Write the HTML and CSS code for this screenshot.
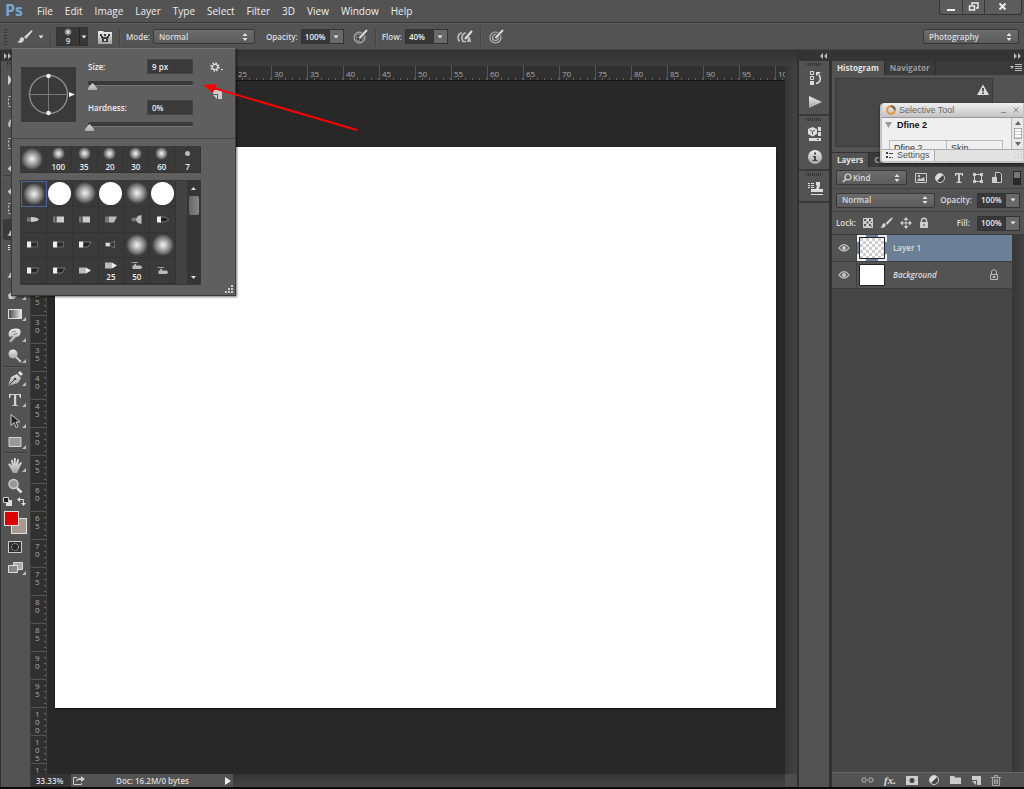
FILE: index.html
```html
<!DOCTYPE html>
<html lang="en">
<head>
<meta charset="utf-8">
<title>Photo editor</title>
<link rel="stylesheet" href="styles.css">
</head>
<body>
<svg class="sprite" aria-hidden="true">
  <defs>
    <linearGradient id="fade"><stop offset="0" stop-color="#444"/><stop offset="1" stop-color="#eee"/></linearGradient>
    <radialGradient id="soft"><stop offset="0" stop-color="#f4f4f4"/><stop offset=".35" stop-color="#bbb"/><stop offset=".75" stop-color="#727272"/><stop offset="1" stop-color="#3a3a3a"/></radialGradient>
    <linearGradient id="metal" x2="0" y2="1"><stop offset="0" stop-color="#eee"/><stop offset="1" stop-color="#a2a2a2"/></linearGradient>
    <pattern id="checker" width="6" height="6" patternUnits="userSpaceOnUse"><path fill="#fff" d="M0 0h6v6H0z"/><path fill="#ccc" d="M0 0h3v3H0zM3 3h3v3H3z"/></pattern>
  </defs>
  <symbol id="brush" viewBox="0 0 16 14"><path fill="#d4d4d4" d="M0 12c3 0 2-3 4-4.500 2-1 3.500.8 3 2.500-1 3-5 3.500-7 2zM7 7l7-6.500c1-.8 2 .3 1.300 1.200L9 9z"/></symbol>
  <symbol id="updown" viewBox="0 0 6 8"><path fill="#e4e4e4" d="M0.500 3L3 0l2.500 3zM.5 5h5L3 8z"/></symbol>
  <symbol id="down" viewBox="0 0 6 4"><path fill="#e4e4e4" d="M.5.500h5L3 3.500z"/></symbol>
  <symbol id="brushpanel" viewBox="0 0 14 14"><path fill="url(#metal)" d="M0 1h5l1 1h8v12H0z"/><path fill="#3b3b3b" d="M2 4h2v2H2zM6 4h2v2H6zM10 4h2v2h-2zM3 6h2v1h4V6h2v2h-1v4H4V8H3z"/><path fill="#ddd" d="M6 9h2v2H6z"/></symbol>
  <symbol id="pressure" viewBox="0 0 15 15"><circle cx="6.500" cy="8.500" r="5.500" fill="#777" stroke="#b8b8b8"/><path fill="#444" d="M4 6h2v2H4zM7 6h2v2H7zM4 9h2v2H4zM7 10h2v2H7zM2 8h1v2H2z"/><path d="M6.500 9l7.500-8" stroke="#4a4a4a" stroke-width="3.400"/><path d="M6.500 9l7.500-8" stroke="#ddd" stroke-width="2"/></symbol>
  <symbol id="sizepressure" viewBox="0 0 15 15"><g fill="none" stroke="#b8b8b8" stroke-width="1.200"><circle cx="6.500" cy="8.500" r="5.500"/><circle cx="6.500" cy="8.500" r="3"/></g><path d="M7 8.500l7-7.500" stroke="#4a4a4a" stroke-width="3.400"/><path d="M6.500 9l7.500-8" stroke="#ddd" stroke-width="2"/></symbol>
  <symbol id="airbrush" viewBox="0 0 16 14"><path fill="none" stroke="#bbb" stroke-width="1.700" d="M5 3C1 3 0 8 2.500 11.500M9 3C5 3 4 8 6 11.500h3"/><path d="M8 9l7-8" stroke="#ddd" stroke-width="2.200"/><path fill="#bbb" d="M11 7h2l1 5h-4z"/></symbol>
  <symbol id="corner" viewBox="0 0 4 4"><path fill="#bbb" d="M4 0v4H0z"/></symbol>
  <symbol id="t-move" viewBox="0 0 16 16"><path fill="#ccc" d="M1 2v10l3-3h4zM11 7h1v3h3v1h-3v3h-1v-3H8v-1h3z"/></symbol>
  <symbol id="t-marquee" viewBox="0 0 16 16"><path fill="none" stroke="#ccc" stroke-dasharray="2 2" d="M1.500 2.500h12v10h-12z"/></symbol>
  <symbol id="t-lasso" viewBox="0 0 16 16"><path fill="none" stroke="#ccc" stroke-width="1.500" d="M3 12C-2 5 12 0 14 5s-8 7-11 3"/></symbol>
  <symbol id="t-heal" viewBox="0 0 16 16"><path stroke="#ccc" stroke-width="4" d="M2 13L13 3"/></symbol>
  <symbol id="t-eraser" viewBox="0 0 16 16"><path fill="#ccc" d="M1 10l8-7h5v4l-7 7H2z"/></symbol>
  <symbol id="t-gradient" viewBox="0 0 16 16"><path fill="url(#fade)" stroke="#ddd" d="M1.500 3.500h13v9h-13z"/></symbol>
  <symbol id="t-smudge" viewBox="0 0 16 16"><path fill="url(#metal)" d="M2 5c1-3 5-4 8-3.500 4 .5 4 3 3.500 5C13 9 11 10 9 10L4.500 15c-1 1-3 0-2-1.500L6 9 3 10C1.500 9.500 1 7 2 5z"/><path stroke="#777" fill="none" stroke-width=".8" d="M5 5l4-1M6 7.500l4-1"/></symbol>
  <symbol id="t-dodge" viewBox="0 0 16 16"><circle cx="6" cy="6" r="4.500" fill="url(#metal)"/><path d="M9 9l5 5" stroke="#ccc" stroke-width="1.800"/></symbol>
  <symbol id="t-pen" viewBox="0 0 16 16"><path fill="url(#metal)" d="M1 15L4 6l6-3 4 4-3 5zM11 2l2-2 3 3-2 2z"/><path d="M1.500 14.500L8 8" stroke="#444"/><circle cx="8" cy="8" r="1.300" fill="#444"/></symbol>
  <symbol id="t-type" viewBox="0 0 16 16"><path fill="#d4d4d4" d="M2 2h12v4h-1l-1-3H9.200v10l2 .5V14H5v-.5l2-.5V3H4L3 6H2z"/></symbol>
  <symbol id="t-select" viewBox="0 0 16 16"><path fill="#222" stroke="#ccc" d="M4 1.500v11l3-3 2 5 2-1-2-4.500h4z"/></symbol>
  <symbol id="t-rect" viewBox="0 0 16 16"><path fill="#999" stroke="#d4d4d4" d="M2 3.500h12v9H2z"/></symbol>
  <symbol id="t-hand" viewBox="0 0 16 16"><path fill="url(#metal)" d="M1 7l2-.5 2 2L4 3l1.500-.5L7 7V1h1.700v6L10.500 2l1.500.5-1 5.500 2.500-3 1.500.8L12 12l-2 4H6z"/></symbol>
  <symbol id="t-zoom" viewBox="0 0 16 16"><circle cx="6.500" cy="6" r="4.500" fill="#999" stroke="#ccc" stroke-width="1.500"/><path d="M10 10l4.500 4.500" stroke="#ddd" stroke-width="2.500"/></symbol>
  <symbol id="defaults" viewBox="0 0 9 9"><path fill="#ddd" d="M3 3h6v6H3z"/><path fill="#222" stroke="#ccc" d="M.5.500h5v5h-5z"/></symbol>
  <symbol id="swap" viewBox="0 0 9 9"><path fill="none" stroke="#ddd" d="M2 2.500h4.500V7"/><path fill="#ddd" d="M3 0v5L0 2.500zM4 6h5L6.500 9z"/></symbol>
  <symbol id="mask" viewBox="0 0 14 12"><path fill="#333" stroke="#ccc" d="M.5.500h13v11H.5z"/><circle cx="7" cy="6" r="3.500" fill="#292929" stroke="#bbb" stroke-dasharray="1.500 1"/></symbol>
  <symbol id="screen" viewBox="0 0 15 12"><path fill="#aaa" stroke="#ddd" d="M5.500.5h9v7h-9z"/><path fill="#888" stroke="#ddd" d="M.5 3.500h9v7h-9z"/></symbol>
  <symbol id="d-history" viewBox="0 0 14 15"><path fill="#555" stroke="#ddd" d="M2.500.5h3v3h-3zM2.500 5.500h3v3h-3z"/><path fill="#ddd" d="M2 10h4v4H2z"/><path fill="none" stroke="#ddd" stroke-width="1.600" d="M8 12.500c5-1 5-5 3-9"/><path fill="#ddd" d="M8 5V1h5z"/></symbol>
  <symbol id="d-play" viewBox="0 0 14 12"><path fill="url(#metal)" d="M1 0l13 6-13 6z"/></symbol>
  <symbol id="d-props" viewBox="0 0 14 14"><path fill="#ddd" d="M4.500 0L9 2v5L4.500 9.500 0 7V2z"/><path stroke="#555" fill="none" d="M2 3l2.500 1.500L7 3M4.500 4.500v3"/><path fill="#ddd" d="M10 0h3v4h-3zM10 5h3v4h-3zM1 11h12v3H1z"/><path fill="#555" d="M9 12h2v1H9z"/></symbol>
  <symbol id="d-info" viewBox="0 0 14 14"><circle cx="7" cy="7" r="7" fill="url(#metal)"/><path fill="#444" d="M6 2.500h2v2H6zM5 6h3v4h1.500v1h-5v-1H6V7H5z"/></symbol>
  <symbol id="d-clone" viewBox="0 0 16 14"><path fill="#ddd" d="M1 1h2v1H1zM4 1h3v1H4zM1 3h2v1H1zM4 3h3v1H4zM1 5h2v1H1zM4 5h3v1H4zM9 0h4v3l-1 4h4v3H4V7h5l1-3-1-1zM4 12h12v1H4z"/></symbol>
  <symbol id="warn" viewBox="0 0 12 12"><path fill="#ddd" d="M6 .5L12 11H0z"/><path fill="#333" d="M5.200 4h1.600v3.500H5.200zM5.200 8.500h1.600V10H5.200z"/></symbol>
  <symbol id="menu" viewBox="0 0 12 8"><path fill="#bbb" d="M0 2h4L2 5zM5 0h7v1H5zM5 2h7v1H5zM5 4h7v1H5zM5 6h7v1H5z"/></symbol>
  <symbol id="search" viewBox="0 0 10 10"><circle cx="6" cy="4" r="3" fill="none" stroke="#ddd" stroke-width="1.200"/><path d="M4 6L1 9" stroke="#ddd" stroke-width="1.500"/></symbol>
  <symbol id="f-image" viewBox="0 0 12 12"><path fill="none" stroke="#ccc" d="M.5 1.500h11v9H.5z"/><path fill="#ccc" d="M2 9l2-3 2 1 3-2 1 4zM3 3h2v2H3z"/></symbol>
  <symbol id="f-adjust" viewBox="0 0 12 12"><circle cx="6" cy="6" r="4.500" fill="#ddd"/><path fill="#444" d="M9.200 2.800a4.500 4.500 0 01-6.400 6.400z"/><circle cx="6" cy="6" r="4.500" fill="none" stroke="#ccc"/></symbol>
  <symbol id="f-type" viewBox="0 0 12 12"><path fill="#ccc" d="M2 1h8v3H9L8.500 2.500H7v7l1.500.5v1h-5v-1L5 9.500v-7H3.500L3 4H2z"/></symbol>
  <symbol id="f-shape" viewBox="0 0 12 12"><path fill="none" stroke="#ccc" d="M2.500 2.500h7v7h-7z"/><path fill="#ccc" d="M1 1h3v3H1zM8 1h3v3H8zM1 8h3v3H1zM8 8h3v3H8z"/></symbol>
  <symbol id="f-smart" viewBox="0 0 12 12"><path fill="#444" stroke="#ccc" d="M4.500.5h4l2 2v8h-6z"/><path fill="#ccc" d="M1 5h5v6H1z"/></symbol>
  <symbol id="f-switch" viewBox="0 0 8 14"><path fill="#292929" d="M0 0h8v14H0z"/><path fill="#777" d="M1 1h6v6H1z"/></symbol>
  <symbol id="l-pixels" viewBox="0 0 10 10"><path fill="#ccc" d="M0 0h10v10H0z"/><path fill="#555" d="M1 1h2v2H1zM6 1h2v2H6zM3.500 3.500h2v2h-2zM1 6h2v2H1zM6 6h2v2H6zM8 8h1v1H8zM8 4h1v1H8z"/></symbol>
  <symbol id="l-move" viewBox="0 0 12 12"><path fill="#ccc" d="M6 0l2.500 3h-2v2.500H9v-2L12 6 9 8.500v-2H6.500V9h2L6 12 3.500 9h2V6.500H3v2L0 6l3-2.500v2h2.500V3h-2z"/></symbol>
  <symbol id="lock" viewBox="0 0 10 12"><path fill="none" stroke="#ccc" stroke-width="1.400" d="M2.500 6V3.500c0-3 5-3 5 0V6"/><path fill="#ccc" d="M1 5h8v6H1z"/><path fill="#444" d="M4.500 7h1v2h-1z"/></symbol>
  <symbol id="lock-open" viewBox="0 0 10 12"><path fill="none" stroke="#bbb" d="M2.500 5V3c0-3 5-3 5 0v2M1.500 5.500h7v5h-7zM4 7.500h2v1H4z"/></symbol>
  <symbol id="eye" viewBox="0 0 12 8"><path fill="#555" stroke="#bbb" stroke-width="1.300" d="M1 4c3-4.500 7-4.500 10 0-3 4-7 4-10 0z"/><circle cx="6" cy="4" r="2" fill="#ccc"/></symbol>
  <symbol id="b-link" viewBox="0 0 13 10"><path fill="none" stroke="#999" stroke-width="1.300" d="M5 7H3.500a2.500 2 0 010-4H5M8 3h1.500a2.500 2 0 010 4H8M4 5h5"/></symbol>
  <symbol id="b-mask" viewBox="0 0 12 10"><path fill="#ccc" d="M0 1h12v9H0z"/><circle cx="6" cy="5.500" r="2.500" fill="#444"/></symbol>
  <symbol id="b-folder" viewBox="0 0 11 10"><path fill="#ccc" d="M0 1h4l1 1.500h6V9H0z"/></symbol>
  <symbol id="b-new" viewBox="0 0 10 10"><path fill="#ccc" d="M1 1h9v9H6V5H1z"/><path fill="#ccc" d="M1 6h4v4z"/></symbol>
  <symbol id="b-trash" viewBox="0 0 10 11"><path fill="none" stroke="#aaa" d="M0 2.500h10M3.500 2V.5h3V2M1.500 3v7.500h7V3M3.500 4v5M5 4v5M6.500 4v5"/></symbol>
  <symbol id="gear" viewBox="0 0 13 10"><circle cx="5" cy="5" r="3.700" fill="none" stroke="#ddd" stroke-width="2" stroke-dasharray="1.500 1.400"/><circle cx="5" cy="5" r="2.600" fill="none" stroke="#ddd" stroke-width="1.200"/><path fill="#ddd" d="M11 7h2v1h-2z"/></symbol>
  <symbol id="export" viewBox="0 0 12 9"><path fill="none" stroke="#ccc" d="M4 1.500H.5v7h8V7"/><path fill="#ccc" d="M3 6c0-3 2-4 5-4V0l4 3-4 3V4C6 4 4 4 3 6z"/></symbol>
  <symbol id="tip-round" viewBox="0 0 14 8"><path fill="#777" d="M1 2h5v4H1z"/><path fill="#ccc" d="M5 1.500c4 0 7 1 8 2.500-1 1.500-4 2.500-8 2.500z"/></symbol>
  <symbol id="tip-flat" viewBox="0 0 14 8"><path fill="#777" d="M1 1h4v6H1z"/><path fill="#ccc" d="M5 1h7v6H5z"/><path fill="#555" d="M3 1h1v6H3z"/></symbol>
  <symbol id="tip-angle" viewBox="0 0 14 8"><path fill="#777" d="M1 1h4v6H1z"/><path fill="#bbb" d="M5 1h8l-3 6H5z"/></symbol>
  <symbol id="tip-fan" viewBox="0 0 14 10"><path fill="#777" d="M1 3h5v4H1z"/><path fill="#bbb" d="M6 4l2-3 4-1v10l-4-1-2-3z"/></symbol>
  <symbol id="tip-dark" viewBox="0 0 14 8"><path fill="#1f1f1f" stroke="#777" d="M4 1.500h5l4 2.500-4 2.500H4z"/><path fill="#eee" d="M1 1h4v6H1z"/></symbol>
  <symbol id="tip-box" viewBox="0 0 14 8"><path fill="#292929" stroke="#666" d="M5 1.500h6.500v5H5z"/><path fill="#eee" d="M1 1h4v6H1z"/></symbol>
  <symbol id="tip-slant" viewBox="0 0 14 8"><path fill="#222" stroke="#777" d="M5 1.500h8l-3 5H5z"/><path fill="#eee" d="M1 1h4v6H1z"/></symbol>
  <symbol id="tip-fandark" viewBox="0 0 14 10"><path fill="#ddd" d="M1 3h5v4H1z"/><path fill="#333" stroke="#777" d="M6 4l5-3v8L6 6z"/></symbol>
  <symbol id="tip-pencil" viewBox="0 0 14 8"><path fill="#bbb" d="M1 1h7v6H1z"/><path fill="#eee" d="M8 1l5 3-5 3z"/></symbol>
  <symbol id="tip-air" viewBox="0 0 14 10"><path fill="#bbb" d="M1 1h7v1H1zM4 3h2v2H4zM2 5h9l2 2-2 2H2z"/></symbol>
</svg>

<div class="app">
  <header class="menubar">
    <div class="logo">Ps</div>
    <nav class="menus">
      <button>File</button><button>Edit</button><button>Image</button><button>Layer</button><button>Type</button><button>Select</button><button>Filter</button><button>3D</button><button>View</button><button>Window</button><button>Help</button>
    </nav>
    <div class="window-buttons">
      <button aria-label="Minimize"><svg width="10" height="10"><path fill="#eee" d="M1 7h8v2H1z"/></svg></button>
      <button aria-label="Restore"><svg width="12" height="10"><path fill="none" stroke="#eee" stroke-width="1.500" d="M4 3V1h6v5H8M1.500 4h5v4h-5z"/></svg></button>
      <button class="close" aria-label="Close"><svg width="10" height="10"><path stroke="#eee" stroke-width="2" d="M1.500 1.500l6 6M7.500 1.500l-6 6"/></svg></button>
    </div>
  </header>

  <div class="options">
    <span class="grip-v"></span>
    <button class="tool-preset" aria-label="Brush tool"><svg width="16" height="14"><use href="#brush"/></svg><svg width="6" height="4"><use href="#down"/></svg></button>
    <span class="rule"></span>
    <button class="brush-preset" aria-label="Brush preset"><span class="brush-value"><svg width="8" height="8"><circle cx="4" cy="4" r="4" fill="url(#soft)"/></svg>9</span><span class="brush-open"><svg width="6" height="4"><use href="#down"/></svg></span></button>
    <button class="icon" aria-label="Brush panel"><svg width="14" height="14"><use href="#brushpanel"/></svg></button>
    <span class="rule"></span>
    <label for="mode">Mode:</label>
    <span class="select mode"><select id="mode"><option>Normal</option></select><svg width="6" height="8"><use href="#updown"/></svg></span>
    <label for="opacity">Opacity:</label>
    <span class="combo"><input id="opacity" value="100%"><button aria-label="Opacity slider"><svg width="6" height="4"><use href="#down"/></svg></button></span>
    <button class="icon" aria-label="Pressure for opacity"><svg width="15" height="15"><use href="#pressure"/></svg></button>
    <span class="rule"></span>
    <label for="flow">Flow:</label>
    <span class="combo"><input id="flow" value="40%"><button aria-label="Flow slider"><svg width="6" height="4"><use href="#down"/></svg></button></span>
    <button class="icon" aria-label="Airbrush"><svg width="16" height="14"><use href="#airbrush"/></svg></button>
    <span class="rule"></span>
    <button class="icon" aria-label="Pressure for size"><svg width="15" height="15"><use href="#sizepressure"/></svg></button>
    <span class="select workspace-select"><select aria-label="Workspace"><option>Photography</option></select><svg width="6" height="8"><use href="#updown"/></svg></span>
  </div>

  <main class="workspace">
    <aside class="toolbox">
      <div class="dock-head left"><svg width="7" height="6"><path fill="#bbb" d="M0 0l3 3-3 3zM4 0l3 3-3 3z"/></svg></div>
      <div class="tools">
        <span class="grip-h"></span>
        <button aria-label="Move"><svg width="16" height="16"><use href="#t-move"/></svg></button>
        <button aria-label="Marquee"><svg width="16" height="16"><use href="#t-marquee"/></svg></button>
        <button aria-label="Lasso"><svg width="16" height="16"><use href="#t-lasso"/></svg></button>
        <button aria-label="Quick selection"><svg width="16" height="16"><use href="#t-marquee"/></svg></button>
        <button aria-label="Eyedropper"><svg width="16" height="16"><use href="#t-heal"/></svg></button>
        <hr>
        <button aria-label="Healing"><svg width="16" height="16"><use href="#t-heal"/></svg></button>
        <button aria-label="Crop"><svg width="16" height="16"><use href="#t-marquee"/></svg></button>
        <button class="active" aria-label="Brush"><svg width="16" height="14"><use href="#brush"/></svg></button>
        <button aria-label="Clone stamp"><svg width="16" height="16"><use href="#d-clone"/></svg></button>
        <button aria-label="History brush"><svg width="16" height="14"><use href="#brush"/></svg></button>
        <button aria-label="Eraser"><svg width="16" height="16"><use href="#t-eraser"/></svg><svg class="more" width="4" height="4"><use href="#corner"/></svg></button>
        <button aria-label="Gradient"><svg width="16" height="16"><use href="#t-gradient"/></svg><svg class="more" width="4" height="4"><use href="#corner"/></svg></button>
        <button aria-label="Smudge"><svg width="16" height="16"><use href="#t-smudge"/></svg><svg class="more" width="4" height="4"><use href="#corner"/></svg></button>
        <button aria-label="Dodge"><svg width="16" height="16"><use href="#t-dodge"/></svg><svg class="more" width="4" height="4"><use href="#corner"/></svg></button>
        <hr>
        <button aria-label="Pen"><svg width="16" height="16"><use href="#t-pen"/></svg><svg class="more" width="4" height="4"><use href="#corner"/></svg></button>
        <button aria-label="Type"><svg width="16" height="16"><use href="#t-type"/></svg><svg class="more" width="4" height="4"><use href="#corner"/></svg></button>
        <button aria-label="Path selection"><svg width="16" height="16"><use href="#t-select"/></svg><svg class="more" width="4" height="4"><use href="#corner"/></svg></button>
        <button aria-label="Rectangle"><svg width="16" height="16"><use href="#t-rect"/></svg><svg class="more" width="4" height="4"><use href="#corner"/></svg></button>
        <hr>
        <button aria-label="Hand"><svg width="16" height="16"><use href="#t-hand"/></svg><svg class="more" width="4" height="4"><use href="#corner"/></svg></button>
        <button aria-label="Zoom"><svg width="16" height="16"><use href="#t-zoom"/></svg></button>
        <div class="color-tools">
          <button aria-label="Default colors"><svg width="9" height="9"><use href="#defaults"/></svg></button>
          <button aria-label="Swap colors"><svg width="9" height="9"><use href="#swap"/></svg></button>
        </div>
        <div class="swatches"><button class="back" aria-label="Background color"></button><button class="fore" aria-label="Foreground color"></button></div>
        <button aria-label="Quick mask"><svg width="14" height="12"><use href="#mask"/></svg></button>
        <button aria-label="Screen mode"><svg width="15" height="12"><use href="#screen"/></svg><svg class="more" width="4" height="4"><use href="#corner"/></svg></button>
      </div>
    </aside>

    <section class="document">
      <div class="doc-tabs"></div>
      <div class="ruler-corner"></div>
      <div class="ruler-x" id="ruler-x"></div>
      <div class="ruler-y" id="ruler-y"></div>
      <div class="stage"><div class="canvas"></div></div>
      <div class="scroll-y"></div>
      <footer class="status">
        <span class="zoom">33.33%</span>
        <div class="doc-info"><svg width="12" height="9"><use href="#export"/></svg><span>Doc: 16.2M/0 bytes</span><svg width="6" height="8"><path fill="#eee" d="M0 0l6 4-6 4z"/></svg></div>
        <span class="scroll-x"></span><span class="scroll-end"></span>
      </footer>
    </section>

    <aside class="docks">
      <div class="dock-head"><svg class="collapse" width="7" height="6"><path fill="#bbb" d="M3 0v6L0 3zM7 0v6L4 3z"/></svg><svg width="7" height="6"><path fill="#bbb" d="M0 0l3 3-3 3zM4 0l3 3-3 3z"/></svg></div>
      <div class="icon-dock">
        <div class="dock-group"><span class="grip-h"></span><button aria-label="History"><svg width="14" height="15"><use href="#d-history"/></svg></button><button aria-label="Actions"><svg width="14" height="12"><use href="#d-play"/></svg></button></div>
        <div class="dock-group"><span class="grip-h"></span><button aria-label="Properties"><svg width="14" height="14"><use href="#d-props"/></svg></button><button aria-label="Info"><svg width="14" height="14"><use href="#d-info"/></svg></button></div>
        <div class="dock-group"><span class="grip-h"></span><button aria-label="Clone source"><svg width="16" height="14"><use href="#d-clone"/></svg></button></div>
      </div>
      <div class="panels">
        <div class="tabs"><button class="on">Histogram</button><button>Navigator</button><svg width="12" height="8"><use href="#menu"/></svg></div>
        <div class="histogram"><div class="plot"><svg width="12" height="12"><use href="#warn"/></svg></div></div>
        <div class="tabs"><button class="on">Layers</button><button>Channels</button><button>Paths</button></div>
        <div class="filters">
          <span class="select kind"><svg class="lens" width="10" height="10"><use href="#search"/></svg><select aria-label="Filter kind"><option>Kind</option></select><svg width="6" height="8"><use href="#updown"/></svg></span>
          <button aria-label="Pixel layers"><svg width="12" height="12"><use href="#f-image"/></svg></button>
          <button aria-label="Adjustment layers"><svg width="12" height="12"><use href="#f-adjust"/></svg></button>
          <button aria-label="Type layers"><svg width="12" height="12"><use href="#f-type"/></svg></button>
          <button aria-label="Shape layers"><svg width="12" height="12"><use href="#f-shape"/></svg></button>
          <button aria-label="Smart objects"><svg width="12" height="12"><use href="#f-smart"/></svg></button>
          <button aria-label="Filtering"><svg width="8" height="14"><use href="#f-switch"/></svg></button>
        </div>
        <div class="blend">
          <span class="select blend-select"><select aria-label="Blend mode"><option>Normal</option></select><svg width="6" height="8"><use href="#updown"/></svg></span>
          <label for="lopacity">Opacity:</label>
          <span class="combo"><input id="lopacity" value="100%"><button aria-label="Layer opacity slider"><svg width="6" height="4"><use href="#down"/></svg></button></span>
        </div>
        <div class="locks">
          <span>Lock:</span>
          <button aria-label="Lock pixels"><svg width="10" height="10"><use href="#l-pixels"/></svg></button>
          <button aria-label="Lock painting"><svg width="13" height="12"><use href="#brush"/></svg></button>
          <button aria-label="Lock position"><svg width="12" height="12"><use href="#l-move"/></svg></button>
          <button aria-label="Lock all"><svg width="10" height="12"><use href="#lock"/></svg></button>
          <label class="fill" for="fill">Fill:</label>
          <span class="combo"><input id="fill" value="100%"><button aria-label="Fill slider"><svg width="6" height="4"><use href="#down"/></svg></button></span>
        </div>
        <div class="layer-area">
          <div class="layer-list">
            <div class="layer chosen"><button class="eye" aria-label="Hide layer"><svg width="12" height="8"><use href="#eye"/></svg></button><svg width="30" height="26"><path fill="none" stroke="#e8eef4" stroke-width="2" d="M1 7V1h8M21 1h8v6M29 19v6h-8M9 25H1v-6"/><path fill="url(#checker)" stroke="#222" d="M2.500 2.500h25v21h-25z"/></svg><span>Layer 1</span></div>
            <div class="layer"><button class="eye" aria-label="Hide background"><svg width="12" height="8"><use href="#eye"/></svg></button><svg width="30" height="26"><path fill="#fff" stroke="#222" d="M2.500 2.500h25v21h-25z"/></svg><i>Background</i><svg class="locked" width="10" height="12"><use href="#lock-open"/></svg></div>
          </div>
        </div>
        <div class="layer-actions">
          <button aria-label="Link"><svg width="13" height="10"><use href="#b-link"/></svg></button>
          <button class="fx">fx.</button>
          <button aria-label="Add mask"><svg width="12" height="10"><use href="#b-mask"/></svg></button>
          <button aria-label="Adjustment"><svg width="12" height="12"><use href="#f-adjust"/></svg></button>
          <button aria-label="Group"><svg width="11" height="10"><use href="#b-folder"/></svg></button>
          <button aria-label="New layer"><svg width="10" height="10"><use href="#b-new"/></svg></button>
          <button aria-label="Delete layer"><svg width="10" height="11"><use href="#b-trash"/></svg></button>
        </div>
      </div>
    </aside>
  </main>

  <section class="brush-popup">
    <div class="brush-top">
      <svg width="55" height="55"><path fill="#3a3a3a" d="M0 0h55v55H0z"/><path stroke="#777" d="M9 27.500h38M27.500 9v37"/><circle cx="27.500" cy="27.500" r="19" fill="none" stroke="#888" stroke-width="1.500"/><circle cx="27.500" cy="9" r="2.300" fill="#eee"/><circle cx="27.500" cy="46" r="2.300" fill="#eee"/><path fill="#eee" d="M48 25v5l6-2.500z"/></svg>
      <div class="brush-fields">
        <div class="field"><label for="size">Size:</label><input id="size" value="9 px"></div>
        <input type="range" aria-label="Size" min="0" max="100" value="0" class="size-range">
        <div class="field"><label for="hardness">Hardness:</label><input id="hardness" value="0%"></div>
        <input type="range" aria-label="Hardness" min="0" max="100" value="0" class="hard-range">
      </div>
      <div class="brush-side"><button aria-label="Settings"><svg width="13" height="10"><use href="#gear"/></svg></button><button aria-label="New preset"><svg width="10" height="10"><use href="#b-new"/></svg></button></div>
    </div>
    <div class="brush-lists">
      <div class="recent" id="recent"></div>
      <div class="presets"><div class="preset-grid" id="presets"></div><div class="preset-scroll"><svg width="5" height="3"><path fill="#ddd" d="M0 3l2.500-3L5 3z"/></svg><span></span><svg width="5" height="3"><path fill="#ddd" d="M0 0h5L2.500 3z"/></svg></div></div>
    </div>
    <svg class="resize" width="8" height="8"><path fill="#ccc" d="M6 0h2v2H6zM3 3h2v2H3zM6 3h2v2H6zM0 6h2v2H0zM3 6h2v2H3zM6 6h2v2H6z"/></svg>
  </section>

  <section class="plugin">
    <header><svg width="10" height="10"><circle cx="5" cy="5" r="3.800" fill="none" stroke="#e8943a" stroke-width="2"/><path fill="none" stroke="#666" stroke-width="2" d="M5 1.200A3.800 3.800 0 018.800 5"/></svg><span>Selective Tool</span><button aria-label="Minimize plug-in"><svg width="6" height="8"><path fill="#888" d="M0 6h5v1H0z"/></svg></button><button aria-label="Close plug-in"><svg width="6" height="8"><path stroke="#888" d="M.5 1.500l5 5M5.500 1.500l-5 5"/></svg></button></header>
    <div class="plugin-body">
      <div class="plugin-main">
        <h2><svg width="7" height="6"><path fill="#999" d="M0 0h7L3.500 6z"/></svg>Dfine 2</h2>
        <div class="plugin-grid"><span>Dfine 2</span><span>Skin</span></div>
      </div>
      <div class="plugin-scroll"><svg width="6" height="4"><path fill="#666" d="M0 4l3-4 3 4z"/></svg><span></span><svg width="6" height="4"><path fill="#666" d="M0 0h6L3 4z"/></svg></div>
    </div>
    <footer><button><svg width="8" height="7"><path fill="#444" d="M0 0h2v2H0zM0 4h2v2H0zM3 1h4v1H3zM3 5h2v1H3zM6 5h1v1H6z"/></svg>Settings</button><svg width="9" height="9"><path fill="#bbb" d="M7 0h1v1H7zM4 3h1v1H4zM7 3h1v1H7zM1 6h1v1H1zM4 6h1v1H4zM7 6h1v1H7z"/></svg></footer>
  </section>

  <svg class="arrow" width="160" height="52"><path stroke="#f00" stroke-width="2" d="M10 5l147 43"/><path fill="#f00" d="M3 3l14-1-4 9z"/></svg>
</div>
<script src="script.js"></script>
</body>
</html>
```

FILE: styles.css
```css
* { box-sizing: border-box; }
body { margin: 0; background: #0d0a0c; color: #ddd; font: 600 8px/12px "Open Sans", "Noto Sans", sans-serif; }
button, input, select { font: inherit; color: inherit; margin: 0; padding: 0; border: 0; background: none; border-radius: 0; }
button { display: flex; align-items: center; justify-content: center; }
svg { display: block; flex: none; }
.sprite { position: absolute; width: 0; height: 0; }
.app { position: relative; height: 100vh; min-height: 620px; overflow: hidden; display: flex; flex-direction: column; padding-bottom: 2px; }

.menubar { display: flex; height: 23px; background: #535353; border-bottom: 1px solid #383838; }
.logo { width: 31px; padding-left: 5px; font: 700 16px/21px "Open Sans", sans-serif; color: #77a6d6; }
.menus { display: flex; align-items: center; gap: 12px; padding-left: 6px; font: 400 10px/20px "Open Sans", sans-serif; color: #eee; }
.window-buttons { display: flex; margin: 0 2px 0 auto; height: 15px; border: 1px solid #333; border-top: 0; border-radius: 0 0 3px 3px; background: #5c5c5c; }
.window-buttons button { width: 22px; }
.window-buttons button + button { border-left: 1px solid #383838; }
.window-buttons .close { width: 37px; }

.options { display: flex; align-items: center; height: 27px; padding: 0 5px 0 4px; background: #535353; border-top: 1px solid #5e5e5e; border-bottom: 1px solid #444; }
.grip-v { width: 3px; height: 16px; background: repeating-linear-gradient(#333 0 1px, transparent 1px 3px); }
.rule { width: 2px; height: 18px; background: #444; border-right: 1px solid #5a5a5a; }
.tool-preset { gap: 5px; margin: 0 6px 0 10px; }
.brush-preset { height: 19px; margin: 0 10px 0 4px; border: 1px solid #333; background: #383838; }
.brush-value { display: flex; flex-direction: column; align-items: center; width: 22px; line-height: 9px; }
.brush-open { display: flex; align-items: center; justify-content: center; width: 8px; height: 100%; border-left: 1px solid #222; }
.brush-preset + .icon { margin-right: 7px; }
.rule + label { margin-left: 5px; }
.options label { margin-right: 3px; }
.select { display: grid; grid-template-columns: 1fr 12px; align-items: center; height: 15px; border: 1px solid #373737; border-radius: 2px; background: linear-gradient(#6c6c6c, #5c5c5c); }
.select select { grid-area: 1 / 1 / 2 / 3; width: 100%; height: 13px; padding: 0 5px; appearance: none; line-height: 12px; outline: none; }
.select > svg:last-child { grid-area: 1 / 2; pointer-events: none; }
.mode { width: 102px; margin-right: 11px; }
.workspace-select { width: 96px; margin-left: auto; }
.combo { display: flex; height: 15px; border: 1px solid #333; background: #383838; }
.combo input { width: 27px; padding-left: 3px; outline: none; color: #eee; }
.combo button { width: 14px; background: #686868; border-left: 1px solid #333; }
.options .combo { margin-right: 9px; }
.options .icon + .rule { margin-left: 7px; }
.brush-preset + .icon + .rule { margin-left: 0; }
.rule + .icon { margin-left: 7px; }

.workspace { flex: 1; min-height: 0; display: grid; grid-template-columns: 31px minmax(0, 1fr) 226px; background: #303030; }
.dock-head { display: flex; align-items: center; justify-content: flex-end; height: 11px; padding-right: 3px; background: #343434; }
.dock-head.left { justify-content: flex-start; padding-left: 3px; }
.toolbox { display: flex; flex-direction: column; padding-left: 1px; min-height: 0; }
.tools { flex: 1; display: flex; flex-direction: column; background: #535353; border-right: 1px solid #3c3c3c; padding: 1px 1px 0 0; }
.grip-h { width: 16px; height: 3px; margin: 0 auto 5px; background: repeating-linear-gradient(90deg, #333 0 1px, transparent 1px 2px); }
.tools > button { height: 21px; gap: 0; }
.tools .more { align-self: flex-end; margin: 0 -3px 3px -1px; }
.tools > .active { background: #3a3a3a; margin: 0 2px; border-radius: 2px; }
.tools hr { width: 23px; height: 2px; margin: 0 auto; border: 0; background: #3d3d3d; border-bottom: 1px solid #5c5c5c; }
.color-tools { display: flex; justify-content: space-between; height: 10px; padding: 0 3px 0 2px; }
.swatches { display: grid; grid-template-columns: 7px 8px 8px; grid-template-rows: 7px 8px 8px; margin: 5px 0 2px 3px; }
.swatches button { border: 1px solid #ddd; }
.fore { grid-area: 1 / 1 / 3 / 3; background: #df0000; z-index: 1; }
.back { grid-area: 2 / 2 / 4 / 4; background: #a59a8d; }

.document { display: grid; grid-template: 16px 15px minmax(0, 1fr) 13px / 16px minmax(0, 1fr) 12px; padding-right: 1px; background: #303030; min-width: 0; min-height: 0; }
.doc-tabs { grid-column: 1 / 4; background: linear-gradient(#323232, #3e3e3e); }
.ruler-corner { background: #303030; }
.ruler-x { grid-column: 2; display: flex; overflow: hidden; padding-left: 8px; background: #303030; border-bottom: 1px solid #151515; color: #aaa; font-weight: 400; }
.ruler-x span { flex: none; width: 36px; height: 14px; padding: 2px 0 0 2px; border-left: 1px solid #555; background: repeating-linear-gradient(90deg, transparent 0 6px, #666 6px 7px) bottom / 100% 2px no-repeat; }
.ruler-y { grid-area: 3 / 1; overflow: hidden; padding-top: 66px; background: #303030; border-right: 1px solid #444; color: #aaa; font-weight: 400; }
.ruler-y span { display: flex; flex-direction: column; height: 28px; padding: 2px 0 0 4px; line-height: 8px; border-top: 1px solid #555; background: repeating-linear-gradient(transparent 0 5px, #666 5px 6px) right / 2px 100% no-repeat; }
.stage { grid-area: 3 / 2; display: flex; padding: 66px 9px 66px 8px; background: #282828; }
.canvas { flex: 1; background: #fff; box-shadow: 0 1px 2px #111; }
.scroll-y { grid-area: 2 / 3 / 4 / 4; background: linear-gradient(90deg, #363636, #434343); }
.status { grid-column: 1 / 4; display: flex; align-items: stretch; background: #3a3a3a; line-height: 13px; }
.zoom { width: 40px; padding-left: 5px; background: #343434; }
.doc-info { display: flex; align-items: center; justify-content: space-between; width: 162px; padding: 0 2px; background: #535353; }
.doc-info span { margin-right: 4px; margin-left: auto; padding-right: 32px; }
.scroll-x { flex: 1; background: linear-gradient(#343434, #454545); }
.scroll-end { width: 12px; background: #4d4d4d; }

.docks { display: grid; grid-template: 11px minmax(0, 1fr) / 30px minmax(0, 1fr); column-gap: 3px; padding-left: 1px; min-height: 0; background: #303030; }
.docks .dock-head { grid-column: 1 / 3; justify-content: space-between; padding-left: 21px; }
.icon-dock { background: #535353; }
.dock-group { padding: 2px 0 1px; border-bottom: 2px solid #393939; }
.dock-group .grip-h { display: block; margin-bottom: 1px; }
.dock-group button { width: 100%; height: 23px; padding-left: 2px; }
.panels { display: flex; flex-direction: column; min-height: 0; background: #535353; }
.tabs { display: flex; align-items: center; height: 14px; background: #3a3a3a; }
.tabs button { height: 14px; padding: 0 5px; border-right: 1px solid #2d2d2d; color: #999; font-weight: 700; }
.tabs .on { background: #535353; color: #e4e4e4; }
.tabs svg { margin: 0 2px 0 auto; }
.histogram { height: 78px; padding: 3px 31px 5px 3px; border-bottom: 1px solid #333; }
.plot { height: 69px; padding: 5px 3px; background: #474747; border: 1px solid #3a3a3a; display: flex; justify-content: flex-end; }
.filters, .blend, .locks { display: flex; align-items: center; padding: 0 4px; }
.filters { height: 22px; gap: 7px; padding-right: 3px; border-bottom: 1px solid #434343; }
.filters button:last-child { margin-left: auto; }
.kind { width: 71px; margin-right: 1px; }
.kind select { padding-left: 16px; }
.kind .lens { grid-area: 1 / 1; margin-left: 5px; }
.blend { height: 23px; gap: 5px; border-bottom: 1px solid #434343; }
.blend-select { flex: 1; }
.locks { height: 23px; gap: 7px; border-bottom: 1px solid #3a3a3a; }
.fill { margin-left: auto; }
.layer-area { flex: 1; min-height: 0; padding-right: 12px; background: linear-gradient(90deg, #363636, #424242) right / 12px 100% no-repeat; }
.layer-list { height: 100%; background: #464646; }
.layer { display: flex; align-items: center; height: 27px; background: #535353; border-bottom: 1px solid #3d3d3d; }
.layer.chosen { background: linear-gradient(90deg, #535353 25px, #6b7f96 25px); }
.eye { width: 25px; height: 100%; border-right: 1px solid #404040; }
.layer > span, .layer > i { padding-left: 6px; }
.locked { margin: 0 13px 0 auto; }
.layer-actions { display: flex; align-items: center; justify-content: flex-end; gap: 10px; height: 15px; padding-right: 23px; border-top: 1px solid #666; }
.fx { font: italic 700 11px/12px "Liberation Serif", serif; }

.brush-popup { position: absolute; left: 11px; top: 48px; width: 225px; background: #5f5f5f; border: 1px solid #3a3a3a; border-top-color: #777; box-shadow: 1px 1px 2px #0008; color: #eee; }
.brush-top { display: flex; height: 90px; padding: 10px 12px 0 9px; border-bottom: 1px solid #474747; }
.brush-top > svg { margin-top: 8px; }
.brush-fields { width: 105px; margin-left: 12px; }
.field { display: flex; justify-content: space-between; height: 15px; line-height: 15px; }
.field input { width: 46px; padding-left: 4px; background: #3a3a3a; border: 1px solid #444; }
input[type="range"] { display: block; appearance: none; width: 105px; height: 14px; margin: 7px 0 5px; }
input[type="range"]::-webkit-slider-runnable-track { height: 5px; margin-bottom: 9px; background: #3a3a3a; border-bottom: 1px solid #777; border-radius: 2px; }
input[type="range"]::-webkit-slider-thumb { appearance: none; width: 9px; height: 7px; margin-top: 2px; background: linear-gradient(#ddd, #aaa); clip-path: polygon(50% 0, 100% 70%, 100% 100%, 0 100%, 0 70%); }
.hard-range::-webkit-slider-thumb { margin-left: -3px; }
.brush-side { display: flex; flex-direction: column; gap: 17px; margin: 3px 0 0 auto; }
.brush-lists { padding: 7px 34px 10px 8px; }
.recent { display: grid; grid-template-columns: repeat(7, 1fr); height: 27px; margin-bottom: 7px; background: #3a3a3a; }
.cell { display: flex; flex-direction: column; align-items: center; justify-content: center; border: 0; border-right: 1px solid #333; border-bottom: 1px solid #333; line-height: 9px; gap: 2px; min-width: 0; }
.presets { display: grid; grid-template-columns: 155px 1fr 13px; height: 105px; background: #424242; border: 1px solid #383838; }
.preset-grid { display: grid; grid-template-columns: repeat(6, 1fr); grid-template-rows: repeat(4, 1fr); background: #3a3a3a; min-height: 0; }
.preset-grid .chosen { border: 1px solid #47669d; }
.preset-scroll { grid-column: 3; display: flex; flex-direction: column; align-items: center; padding: 6px 1px 5px; background: #353535; }
.preset-scroll span { width: 10px; height: 19px; margin: 6px 0 auto; border-radius: 2px; background: linear-gradient(90deg, #666, #888); }
.resize { position: absolute; right: 2px; bottom: 2px; }

.plugin { position: absolute; right: 0; top: 103px; width: 144px; height: 60px; display: flex; flex-direction: column; padding: 0 1px 2px 2px; border-radius: 4px 0 0 4px; background: #c4c4c4; color: #333; font: 400 9px/11px "Liberation Sans", Arial, sans-serif; box-shadow: 0 1px 3px #0008; }
.plugin header { display: flex; align-items: center; gap: 3px; height: 14px; padding: 0 4px; color: #666; background: linear-gradient(#eee, #c4c4c4); border-radius: 4px 0 0; }
.plugin header span { flex: 1; }
.plugin header button + button { margin-left: 3px; }
.plugin-body { flex: 1; min-height: 0; display: flex; background: #efefef; border-top: 1px solid #999; overflow: hidden; }
.plugin-main { flex: 1; padding: 1px 8px 0 3px; }
.plugin h2 { display: flex; align-items: center; gap: 5px; margin: 0; font-size: 9px; line-height: 12px; color: #111; }
.plugin-grid { display: grid; grid-template-columns: 1fr 1fr; margin: 9px 0 0 4px; border: 1px solid #bbb; border-bottom: 0; line-height: 14px; }
.plugin-grid span { padding-left: 4px; }
.plugin-grid span + span { border-left: 1px solid #bbb; }
.plugin-scroll { display: flex; flex-direction: column; align-items: center; justify-content: space-between; width: 12px; padding: 3px 0; background: #e8e8e8; border-left: 1px solid #bbb; }
.plugin-scroll span { width: 8px; height: 11px; border: 1px solid #aaa; background: repeating-linear-gradient(#fff 0 2px, #ccc 2px 3px); }
.plugin footer { display: flex; justify-content: space-between; align-items: center; height: 12px; background: #e2e2e2; border-top: 1px solid #aaa; }
.plugin footer button { gap: 3px; height: 11px; padding: 0 4px; background: #eee; border-right: 1px solid #aaa; color: #555; }
.arrow { position: absolute; left: 200px; top: 82px; pointer-events: none; }
```

FILE: script.js
```js
const fillRuler = (id, count, stacked) => {
  const ruler = document.getElementById(id);
  for (let i = 0; i < count; i++) {
    const mark = document.createElement('span');
    const label = String(i * 5);
    if (stacked) {
      for (const digit of label) {
        const row = document.createElement('div');
        row.textContent = digit;
        mark.append(row);
      }
    } else {
      mark.textContent = label;
    }
    ruler.append(mark);
  }
};
fillRuler('ruler-x', 21, false);
fillRuler('ruler-y', 23, true);

const dot = (size, fill) =>
  `<svg width="${size}" height="${size}"><circle cx="${size / 2}" cy="${size / 2}" r="${size / 2}" fill="${fill}"/></svg>`;
const tip = (name) => `<svg width="14" height="9"><use href="#tip-${name}"/></svg>`;
const cell = (picture, label, chosen) =>
  `<button class="cell${chosen ? ' chosen' : ''}" aria-label="Brush ${label || 'tip'}">${picture}${label ? `<span>${label}</span>` : ''}</button>`;
const soft = dot(22, 'url(#soft)');
const hard = dot(23, '#fff');

document.getElementById('recent').innerHTML =
  cell(soft) + ['100', '35', '20', '30', '60'].map((n) => cell(dot(13, 'url(#soft)'), n)).join('') +
  cell(`<svg width="13" height="13"><circle cx="6.5" cy="6.5" r="2.5" fill="#bbb"/></svg>`, '7');

document.getElementById('presets').innerHTML = [
  cell(soft, '', true), cell(hard), cell(soft), cell(hard), cell(soft), cell(hard),
  cell(tip('round')), cell(tip('flat')), cell(tip('flat')), cell(tip('angle')), cell(tip('fan')), cell(tip('dark')),
  cell(tip('box')), cell(tip('box')), cell(tip('slant')), cell(tip('fandark')), cell(soft), cell(soft),
  cell(tip('slant')), cell(tip('slant')), cell(tip('pencil')), cell(tip('pencil'), '25'), cell(tip('air'), '50'), cell(tip('air')),
].join('');
```
